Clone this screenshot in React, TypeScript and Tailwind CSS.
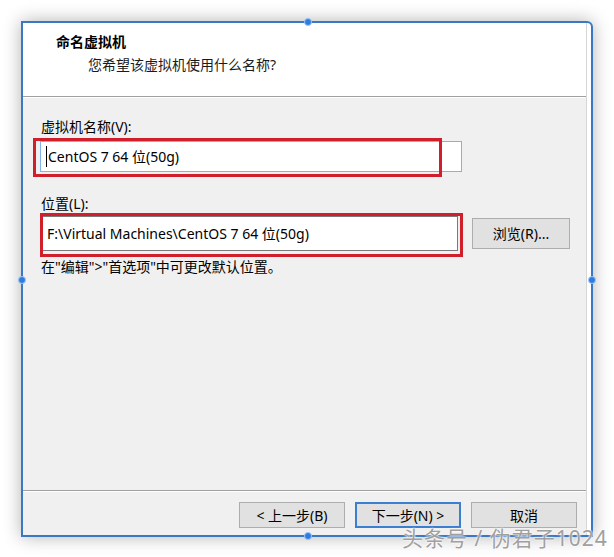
import React from "react";

const uiFont = {
  fontFamily: '"Noto Sans", "Noto Sans CJK SC", sans-serif',
};

function Handle({ className }: { className: string }) {
  return (
    <div
      className={`absolute w-[8px] h-[8px] rounded-full bg-[#2f7ce0] border border-[#9cc6f5] ${className}`}
    />
  );
}

function DlgButton({
  label,
  primary,
}: {
  label: string;
  primary?: boolean;
}) {
  return (
    <div
      className={`w-[106px] h-[26px] flex items-center justify-center text-[14px] text-black bg-[#e1e1e1] ${
        primary ? "border-2 border-[#3c7fd1]" : "border border-[#adadad]"
      }`}>
      {label}
    </div>
  );
}

export default function App() {
  return (
    <div
      className="w-[614px] h-[557px] bg-white pt-[21px] pl-[21px] relative overflow-hidden"
      style={uiFont}>
      {/* 窗口 */}
      <div className="relative w-[572px] h-[516px] border-2 border-[#3a78c6] rounded-tr-[6px] shadow-[0_0_18px_rgba(0,0,0,0.3)] bg-white">
        <div className="h-full mr-[4px] border-r border-[#d6d6d6] flex flex-col">
          {/* 标题区 */}
          <div className="h-[73px] bg-white pl-[33px] pt-[9px]">
            <div className="text-[14px] font-bold text-black leading-[20px]">
              命名虚拟机
            </div>
            <div className="text-[14px] text-[#1a1a1a] leading-[20px] pl-[32px] mt-[3px]">
              您希望该虚拟机使用什么名称?
            </div>
          </div>
          <div className="border-t border-[#a0a0a0] border-b border-b-white" />

          {/* 主体 */}
          <div className="flex-1 bg-[#f0f0f0] pl-[17px] pr-[13px] pt-[19px] text-[14px] text-black">
            <div className="pl-[1px] leading-[20px]">虚拟机名称(V):</div>
            <div className="mt-[4px] w-[422px] h-[31px] bg-white border border-[#7eb4ea] flex items-center pl-[5px]">
              <span className="border-l border-black pl-[1px]">
                CentOS 7 64 位(50g)
              </span>
            </div>

            <div className="pl-[1px] mt-[22px] leading-[20px]">位置(L):</div>
            <div className="mt-[2px] flex items-center gap-[14px]">
              <div className="w-[418px] h-[35px] bg-white border border-[#7a7a7a] flex items-center pl-[6px]">
                F:\Virtual Machines\CentOS 7 64 位(50g)
              </div>
              <div className="w-[98px] h-[31px] bg-[#e1e1e1] border border-[#adadad] flex items-center justify-center">
                浏览(R)...
              </div>
            </div>
            <div className="pl-[1px] mt-[6px] leading-[20px]">
              在"编辑"&gt;"首选项"中可更改默认位置。
            </div>
          </div>

          <div className="border-t border-[#a0a0a0] border-b border-b-white" />

          {/* 按钮区 */}
          <div className="h-[43px] bg-[#f0f0f0] flex justify-end items-start pt-[10px] pr-[9px] gap-[10px]">
            <DlgButton label="< 上一步(B)" />
            <DlgButton label="下一步(N) >" primary />
            <DlgButton label="取消" />
          </div>
        </div>

        {/* 红色标注框 */}
        <div className="absolute left-[10px] top-[115px] w-[409px] h-[39px] border-[3px] border-[#d01f2b]" />
        <div className="absolute left-[17px] top-[190px] w-[423px] h-[44px] border-[3px] border-[#d01f2b]" />

        {/* 控制点 */}
        <Handle className="left-[281px] -top-[5px]" />
        <Handle className="-left-[5px] top-[253px]" />
        <Handle className="-right-[5px] top-[253px]" />
        <Handle className="left-[281px] -bottom-[5px]" />
      </div>

      {/* 水印 */}
      <div className="absolute left-[402px] top-[525px] text-[21px] leading-[26px] text-[#a0a0a0] [text-shadow:0_0_2px_#fff,0_0_2px_#fff] tracking-[1px]">
        头条号 / 伪君子1024
      </div>
    </div>
  );
}
